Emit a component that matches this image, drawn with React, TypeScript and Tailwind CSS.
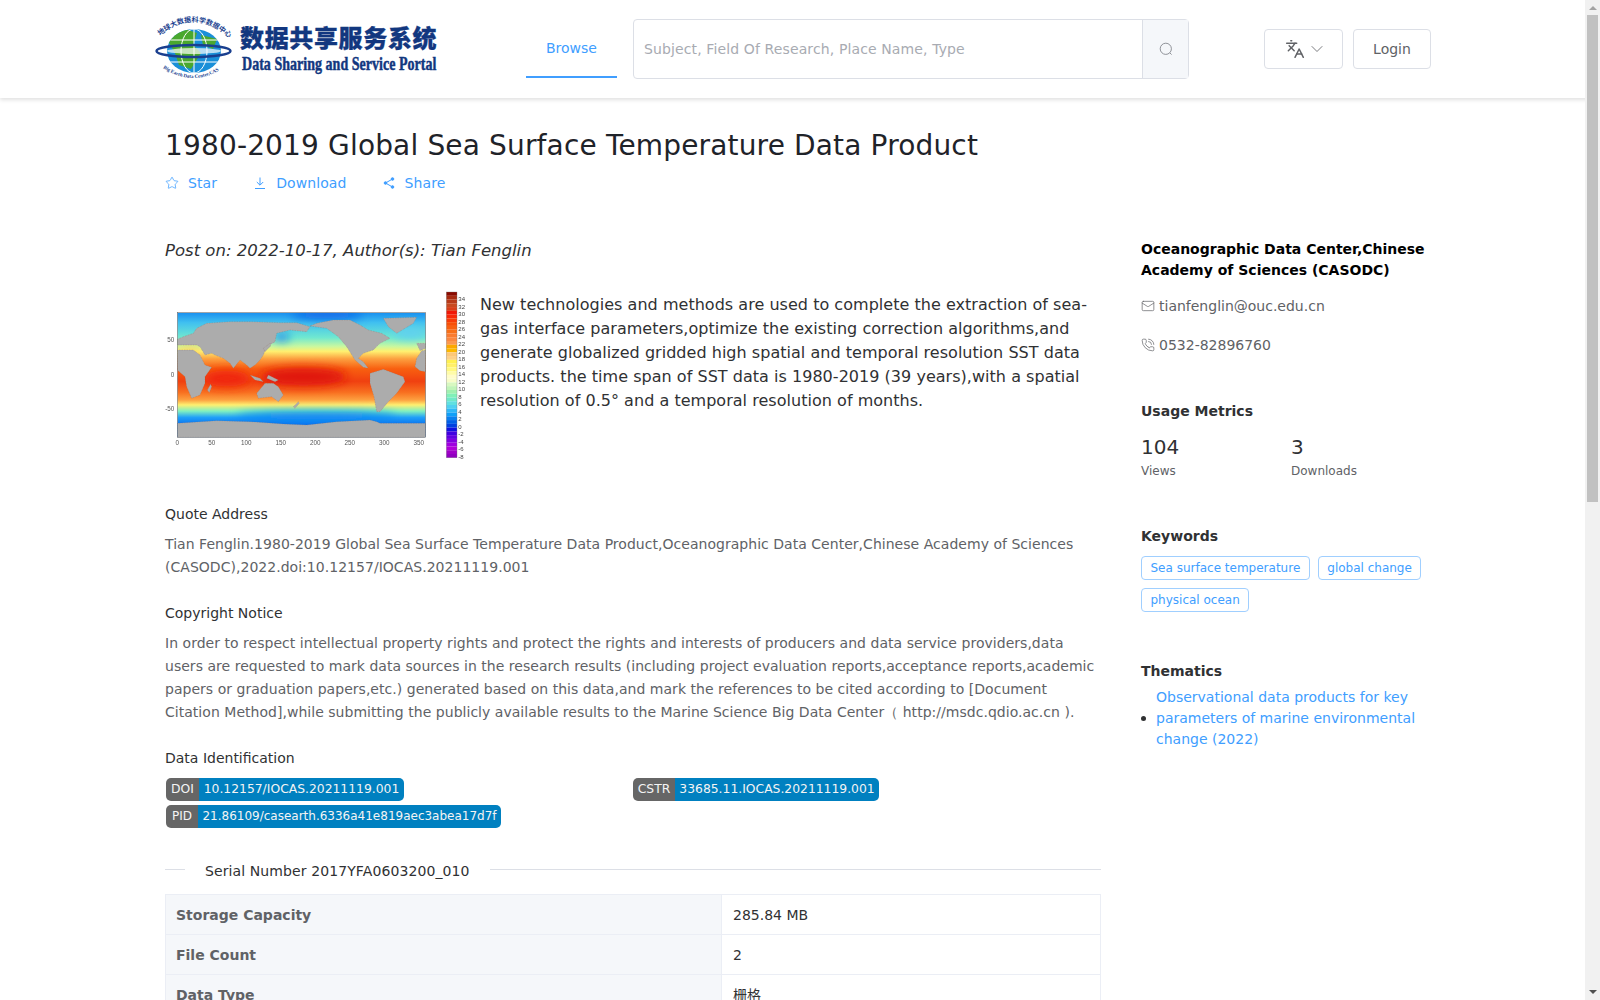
import React from 'react';
import { ChevronDown, Languages, Mail, PhoneCall, Star } from 'lucide-react';

const rows = [
  ['Storage Capacity', '285.84 MB'],
  ['File Count', '2'],
  ['Data Type', '栅格'],
];

const barColors = [
  '#8a0a00', '#a82a10', '#b83a18', '#c84a20', '#d8401a', '#f01808', '#f82808', '#f83c08', '#f85008', '#f86010',
  '#f87018', '#fa7c30', '#fb8840', '#fc9850', '#fca800', '#fcb800', '#fdc878', '#fdd088', '#fff050', '#fff068',
  '#fff880', '#fffca8', '#fffcc8', '#f8fcc8', '#d8f8c0', '#c0f4b8', '#a0f0b0', '#80f0b8', '#70e8c8', '#60e0e0',
  '#50d0f0', '#30b8f8', '#10a0f8', '#0880f0', '#0060e8', '#0040e0', '#1010e0', '#4000e0', '#6000e0', '#8000e0',
  '#a000e0', '#b000d8', '#a000c8', '#9000c0',
];

const barLabels = ['34', '32', '30', '28', '26', '24', '22', '20', '18', '16', '14', '12', '10', '8', '6', '4', '2', '0', '-2', '-4', '-6', '-8'];

const land = [
  '82,178 100,170 130,160 140,145 170,130 240,125 300,125 390,128 440,128 480,140 470,155 420,150 380,160 375,185 350,200 340,225 330,240 315,255 300,265 290,255 270,240 250,265 240,250 220,235 195,225 185,220 165,225 150,200 140,195 110,195 82,195',
  '82,210 130,210 150,225 165,255 185,262 165,290 165,310 150,345 125,355 110,320 105,290 82,270',
  '480,138 530,145 565,170 590,200 615,240 640,262 655,265 640,245 625,235 640,220 670,210 690,190 720,175 695,160 655,150 630,135 600,120 550,120 500,130',
  '660,280 700,268 760,290 765,305 740,340 715,365 690,395 680,395 672,350 660,310',
  '700,115 800,112 790,130 740,160 715,140',
  '795,260 800,235 815,212 827,210 827,275 810,272',
  '800,190 827,190 827,205 810,212',
  '320,340 345,310 370,310 385,320 400,345 385,365 365,350 325,355',
  '172,330 182,312 185,320 178,338',
  '82,430 200,422 300,425 400,432 470,435 560,425 660,420 680,425 690,430 740,430 827,430 827,472 82,472',
  '300,285 330,295 340,305 315,300',
  '355,285 385,300 375,305 350,295',
  '430,380 445,365 448,370 435,385',
  '340,205 360,190 362,198 345,215',
];

const SeaMap = () => (
  <svg viewBox="0 0 990 570" className="float-left -mt-[11px] -ml-[15px] mr-0 h-[190px] w-[330px]">
    <defs>
      <linearGradient id="sst" x1="0" y1="0" x2="0" y2="1">
        <stop offset="0" stopColor="#1890f0" />
        <stop offset="0.08" stopColor="#40c0f0" />
        <stop offset="0.2" stopColor="#70e8d0" />
        <stop offset="0.27" stopColor="#c8f8a0" />
        <stop offset="0.31" stopColor="#fff070" />
        <stop offset="0.37" stopColor="#fca040" />
        <stop offset="0.45" stopColor="#f86010" />
        <stop offset="0.55" stopColor="#f04010" />
        <stop offset="0.64" stopColor="#f87020" />
        <stop offset="0.7" stopColor="#fda040" />
        <stop offset="0.74" stopColor="#fff070" />
        <stop offset="0.79" stopColor="#80f0c0" />
        <stop offset="0.84" stopColor="#20a0f8" />
        <stop offset="0.9" stopColor="#0870f0" />
      </linearGradient>
      <filter id="soft"><feGaussianBlur stdDeviation="1.5" /></filter>
      <filter id="softer"><feGaussianBlur stdDeviation="14" /></filter>
      <clipPath id="frame"><rect x="82" y="98" width="745" height="374" /></clipPath>
    </defs>
    <g clipPath="url(#frame)">
      <rect x="82" y="98" width="745" height="374" fill="url(#sst)" />
      <g filter="url(#softer)">
        <ellipse cx="460" cy="290" rx="130" ry="28" fill="#e01808" />
        <ellipse cx="230" cy="295" rx="70" ry="25" fill="#f02808" />
        <ellipse cx="780" cy="160" rx="50" ry="18" fill="#60d0f0" />
        <ellipse cx="395" cy="172" rx="25" ry="10" fill="#1878f0" />
        <ellipse cx="530" cy="105" rx="110" ry="12" fill="#1060e8" />
        <ellipse cx="500" cy="408" rx="240" ry="12" fill="#1080f0" />
        <ellipse cx="120" cy="205" rx="40" ry="10" fill="#fdd060" />
      </g>
      <g fill="#acacac" stroke="#8a5a50" strokeWidth="1" strokeDasharray="2 3" filter="url(#soft)">
        {land.map((points) => <polygon key={points} points={points} />)}
      </g>
    </g>
    <rect x="82" y="98" width="745" height="374" fill="none" stroke="#555" strokeWidth="1.5" />
    <g fontFamily="'Liberation Sans', sans-serif" fontSize="19" fill="#444" filter="url(#soft)" opacity="0.9">
      {[0, 50, 100, 150, 200, 250, 300, 350].map((v, i) => (
        <text key={v} x={82 + i * 103.5} y="496" textAnchor="middle">{v}</text>
      ))}
      <text x="73" y="186" textAnchor="end">50</text>
      <text x="73" y="290" textAnchor="end">0</text>
      <text x="73" y="394" textAnchor="end">-50</text>
    </g>
    <g>
      {barColors.map((c, i) => <rect key={i} x="889" y={36 + i * 11.3} width="32" height="11.4" fill={c} />)}
      <rect x="889" y="36" width="32" height="497" fill="none" stroke="#777" strokeWidth="1" />
      <g fontFamily="'Liberation Sans', sans-serif" fontSize="18" fill="#444" filter="url(#soft)">
        {barLabels.map((l, i) => <text key={l} x="925" y={64 + i * 22.5}>{l}</text>)}
      </g>
    </g>
  </svg>
);

const Logo = () => (
  <svg viewBox="0 0 285 68" className="h-[68px] w-[285px] shrink-0">
    <defs>
      <clipPath id="globe"><ellipse cx="41" cy="36" rx="27" ry="22" /></clipPath>
    </defs>
    <ellipse cx="41" cy="36" rx="27" ry="22" fill="#1a8fd8" />
    <g clipPath="url(#globe)">
      <path d="M14 24 L32 14 L44 18 L40 30 L48 38 L38 54 L26 50 L22 38 Z" fill="#4aa82e" />
      <path d="M48 20 L64 24 L60 34 L50 30 Z" fill="#4aa82e" />
      <g fill="none" stroke="#fff" strokeWidth="1">
        <ellipse cx="41" cy="36" rx="13" ry="22" />
        <line x1="41" y1="14" x2="41" y2="58" />
        <line x1="14" y1="25" x2="68" y2="25" />
        <line x1="14" y1="47" x2="68" y2="47" />
      </g>
    </g>
    <ellipse cx="40.5" cy="36" rx="37" ry="6" fill="none" stroke="#1a3f8f" strokeWidth="2.5" />
    <ellipse cx="41" cy="36" rx="27" ry="3" fill="#fff" opacity="0.7" />
    <path id="arc-top" d="M7 21 Q40 -7 74 21" fill="none" />
    <text fontFamily="'Noto Sans CJK SC', sans-serif" fontSize="7" fontWeight="700" fill="#1a3f8f">
      <textPath href="#arc-top">地球大数据科学数据中心</textPath>
    </text>
    <path id="arc-bottom" d="M10 53 Q40 73 70 53" fill="none" />
    <text fontFamily="'Liberation Serif', serif" fontSize="5" fontWeight="700" fill="#1a3f8f">
      <textPath href="#arc-bottom">Big Earth Data Center,CAS</textPath>
    </text>
    <text x="87" y="32" fontFamily="'Noto Sans CJK SC', sans-serif" fontSize="24" fontWeight="900" fill="#12377f" stroke="#12377f" strokeWidth="0.3" letterSpacing="0.65">数据共享服务系统</text>
    <text transform="translate(89 55) scale(1 1.4)" fontFamily="'Liberation Serif', serif" fontSize="14" fontWeight="700" fill="#12377f" stroke="#12377f" strokeWidth="0.35" letterSpacing="0.03">Data Sharing and Service Portal</text>
  </svg>
);

const Badge = ({ label, value, labelWidth, className }: { label: string; value: string; labelWidth: string; className: string }) => (
  <div className={`flex h-[23px] overflow-hidden rounded-[5px] leading-[23px] text-[#f4f4f4] ${className}`}>
    <span className={`shrink-0 bg-[#666666] text-center ${labelWidth}`}>{label}</span>
    <span className="flex-1 bg-[#0080c0] text-center">{value}</span>
  </div>
);

const Tag = ({ children }: { children: React.ReactNode }) => (
  <span className="inline-flex h-6 items-center rounded border border-[#a0cfff] px-[8.5px] text-xs text-[#409eff]">{children}</span>
);

export default function App() {
  return (
    <div className="min-h-[1990px] bg-white [font-family:'DejaVu_Sans',sans-serif] text-sm text-[#303133]">
      <header className="flex h-[98px] items-start pl-[153px] shadow-[0_2px_4px_rgba(0,0,0,0.12)]">
        <div className="mt-[15px]"><Logo /></div>
        <a className="ml-[88px] flex h-[78px] w-[91px] items-center justify-center border-b-2 border-[#409eff] pt-[19px] text-[#409eff]">Browse</a>
        <div className="ml-4 mt-[19px] flex h-[60px] w-[556px] rounded border border-[#dcdfe6]">
          <div className="flex flex-1 items-center px-[10px] tracking-[0.12px] text-[#a8abb2]">Subject, Field Of Research, Place Name, Type</div>
          <div className="flex w-[46px] items-center justify-center border-l border-[#dcdfe6] bg-[#f5f7fa] text-[#909399]">
            <svg viewBox="0 0 14 14" className="h-[14px] w-[14px]" fill="none" stroke="currentColor" strokeWidth="1">
              <circle cx="6.8" cy="6.8" r="5.6" />
              <path d="M10.9 10.9l1.7 1.7" />
            </svg>
          </div>
        </div>
        <button className="ml-[75px] mt-[29px] flex h-10 w-[79px] items-center justify-center gap-[2px] rounded border border-[#dcdfe6] pl-[4px] text-[#606266]">
          <Languages size={20} strokeWidth={1.8} />
          <ChevronDown size={20} strokeWidth={1} />
        </button>
        <button className="ml-[10px] mt-[29px] h-10 w-[78px] rounded border border-[#dcdfe6] text-[#606266]">Login</button>
      </header>

      <main className="ml-[165px] w-[1266px]">
        <h1 className="pt-[27px] text-[28px] leading-[42px] tracking-[0.157px] text-[#1f2329]">1980-2019 Global Sea Surface Temperature Data Product</h1>
        <div className="mt-[4px] flex h-[24px] items-center tracking-[0.1px] text-[#409eff]">
          <Star size={14} strokeWidth={1.3} />
          <span className="ml-[9px]">Star</span>
          <svg viewBox="0 0 14 14" className="ml-[36px] h-[14px] w-[14px]" fill="none" stroke="currentColor" strokeWidth="1">
            <path d="M7 1.5V9M3.8 6l3.2 3.2L10.2 6M2 12.5h10" />
          </svg>
          <span className="ml-[9px]">Download</span>
          <svg viewBox="0 0 14 14" className="ml-[35px] h-[14px] w-[14px]" fill="currentColor" stroke="currentColor" strokeWidth="1">
            <path d="M10.5 3 3.5 7l7 4" fill="none" />
            <circle cx="10.5" cy="3" r="1.3" />
            <circle cx="3.5" cy="7" r="1.3" />
            <circle cx="10.5" cy="11" r="1.3" />
          </svg>
          <span className="ml-[9px]">Share</span>
        </div>

        <div className="flex gap-10">
          <div className="w-[936px] shrink-0">
            <p className="mt-[44px] text-[16.5px] leading-6 italic text-[#303133]">Post on: 2022-10-17, Author(s): Tian Fenglin</p>
            <div className="mt-[28px] h-[186px] text-base leading-6">
              <SeaMap />
              <p className="pt-[2px] tracking-[0.03px]">
                New technologies and methods are used to complete the extraction of sea-gas interface parameters,optimize the existing correction algorithms,and generate globalized gridded high spatial and temporal resolution SST data products. the time span of SST data is 1980-2019 (39 years),with a spatial resolution of 0.5° and a temporal resolution of months.
              </p>
            </div>
            <h3 className="mt-[26px] leading-[23px]">Quote Address</h3>
            <p className="mt-[7px] leading-[23px] tracking-[0.03px] text-[#606266]">
              Tian Fenglin.1980-2019 Global Sea Surface Temperature Data Product,Oceanographic Data Center,Chinese Academy of Sciences (CASODC),2022.doi:10.12157/IOCAS.20211119.001
            </p>
            <h3 className="mt-[23px] leading-[23px]">Copyright Notice</h3>
            <p className="mt-[7px] leading-[23px] tracking-[0.03px] text-[#606266]">
              In order to respect intellectual property rights and protect the rights and interests of producers and data service providers,data users are requested to mark data sources in the research results (including project evaluation reports,acceptance reports,academic papers or graduation papers,etc.) generated based on this data,and mark the references to be cited according to [Document Citation Method],while submitting the publicly available results to the Marine Science Big Data Center（ http://msdc.qdio.ac.cn ).
            </p>
            <h3 className="mt-[23px] leading-[23px]">Data Identification</h3>
            <div className="mt-[8px] flex pl-px">
              <Badge label="DOI" value="10.12157/IOCAS.20211119.001" labelWidth="w-[33px]" className="w-[238px] text-[12.35px]" />
              <Badge label="CSTR" value="33685.11.IOCAS.20211119.001" labelWidth="w-[42px]" className="ml-[229px] w-[246px] text-[12.35px]" />
            </div>
            <div className="mt-[4px] flex pl-px">
              <Badge label="PID" value="21.86109/casearth.6336a41e819aec3abea17d7f" labelWidth="w-[32px]" className="w-[335px] text-xs" />
            </div>
            <div className="mt-[31px] flex h-[24px] items-center">
              <div className="mb-[4px] h-px w-5 bg-[#dcdfe6]" />
              <span className="px-5 tracking-[0.1px]">Serial Number 2017YFA0603200_010</span>
              <div className="mb-[4px] h-px flex-1 bg-[#dcdfe6]" />
            </div>
            <div className="mt-[11px] border-t border-l border-[#ebeef5]">
              {rows.map(([label, value]) => (
                <div key={label} className="flex h-10 border-b border-[#ebeef5]">
                  <div className="flex w-[556px] items-center border-r border-[#ebeef5] bg-[#f5f7fa] px-[10px] font-bold text-[#606266]">{label}</div>
                  <div className="flex flex-1 items-center border-r border-[#ebeef5] px-[11px] [font-family:'DejaVu_Sans','Noto_Sans_CJK_SC',sans-serif]">{value}</div>
                </div>
              ))}
            </div>
          </div>

          <aside className="w-[290px]">
            <h4 className="mt-[44px] font-bold leading-[21px] text-black">Oceanographic Data Center,Chinese Academy of Sciences (CASODC)</h4>
            <div className="mt-[13px] flex h-6 items-center gap-1 text-[#606266]">
              <Mail size={14} strokeWidth={1.2} />
              <span>tianfenglin@ouc.edu.cn</span>
            </div>
            <div className="mt-[15px] flex h-6 items-center gap-1 text-[#606266]">
              <PhoneCall size={14} strokeWidth={1.2} />
              <span>0532-82896760</span>
            </div>
            <h4 className="mt-[44px] font-bold leading-[21px]">Usage Metrics</h4>
            <div className="mt-[11px] flex">
              <div className="w-[150px]">
                <div className="text-xl leading-[28px] text-[#303133]">104</div>
                <div className="mt-px text-xs leading-[18px] text-[#606266]">Views</div>
              </div>
              <div>
                <div className="text-xl leading-[28px] text-[#303133]">3</div>
                <div className="mt-px text-xs leading-[18px] text-[#606266]">Downloads</div>
              </div>
            </div>
            <h4 className="mt-[46px] font-bold leading-[21px]">Keywords</h4>
            <div className="mt-[9px] flex flex-wrap gap-x-2 gap-y-2">
              <Tag>Sea surface temperature</Tag>
              <Tag>global change</Tag>
              <Tag>physical ocean</Tag>
            </div>
            <h4 className="mt-[49px] font-bold leading-[21px]">Thematics</h4>
            <div className="mt-[5px] flex items-center">
              <span className="h-[5px] w-[5px] shrink-0 rounded-full bg-[#303133]" />
              <a className="ml-[10px] leading-[21px] text-[#409eff]">Observational data products for key parameters of marine environmental change (2022)</a>
            </div>
          </aside>
        </div>
      </main>

      {/* page scrollbar, the headless browser hides the native one */}
      <div className="fixed inset-y-0 right-0 flex w-[15px] flex-col items-center bg-[#f1f1f1]">
        <div className="mt-[6px] h-0 w-0 border-x-[4px] border-b-[4px] border-x-transparent border-b-[#a3a3a3]" />
        <div className="mt-[5px] h-[487px] w-[11px] bg-[#c1c1c1]" />
        <div className="mt-auto mb-[6px] h-0 w-0 border-x-[4px] border-t-[4px] border-x-transparent border-t-[#505050]" />
      </div>
    </div>
  );
}
